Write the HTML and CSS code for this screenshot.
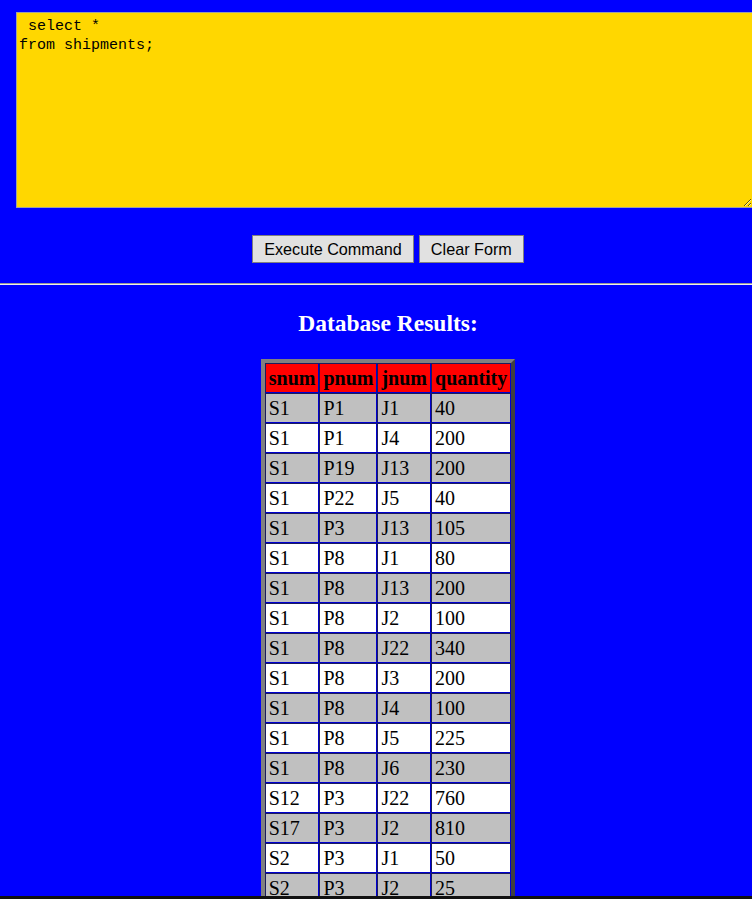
FILE: index.html
```html
<!DOCTYPE html>
<html>
<head>
<meta charset="utf-8">
<title>Database Client</title>
<link rel="stylesheet" href="styles.css">
</head>
<body>
<div class="page">
  <form class="command-form">
    <textarea class="command-box" name="sql"> select *
from shipments;</textarea>
    <div class="button-row">
      <button type="button" class="btn">Execute Command</button>
      <button type="reset" class="btn">Clear Form</button>
    </div>
  </form>
  <hr class="divider">
  <h2 class="results-title">Database Results:</h2>
  <table class="results">
    <thead>
      <tr><th>snum</th><th>pnum</th><th>jnum</th><th>quantity</th></tr>
    </thead>
    <tbody>
      <tr class="odd"><td>S1</td><td>P1</td><td>J1</td><td>40</td></tr>
      <tr class="even"><td>S1</td><td>P1</td><td>J4</td><td>200</td></tr>
      <tr class="odd"><td>S1</td><td>P19</td><td>J13</td><td>200</td></tr>
      <tr class="even"><td>S1</td><td>P22</td><td>J5</td><td>40</td></tr>
      <tr class="odd"><td>S1</td><td>P3</td><td>J13</td><td>105</td></tr>
      <tr class="even"><td>S1</td><td>P8</td><td>J1</td><td>80</td></tr>
      <tr class="odd"><td>S1</td><td>P8</td><td>J13</td><td>200</td></tr>
      <tr class="even"><td>S1</td><td>P8</td><td>J2</td><td>100</td></tr>
      <tr class="odd"><td>S1</td><td>P8</td><td>J22</td><td>340</td></tr>
      <tr class="even"><td>S1</td><td>P8</td><td>J3</td><td>200</td></tr>
      <tr class="odd"><td>S1</td><td>P8</td><td>J4</td><td>100</td></tr>
      <tr class="even"><td>S1</td><td>P8</td><td>J5</td><td>225</td></tr>
      <tr class="odd"><td>S1</td><td>P8</td><td>J6</td><td>230</td></tr>
      <tr class="even"><td>S12</td><td>P3</td><td>J22</td><td>760</td></tr>
      <tr class="odd"><td>S17</td><td>P3</td><td>J2</td><td>810</td></tr>
      <tr class="even"><td>S2</td><td>P3</td><td>J1</td><td>50</td></tr>
      <tr class="odd"><td>S2</td><td>P3</td><td>J2</td><td>25</td></tr>
      <tr class="even"><td>S2</td><td>P3</td><td>J3</td><td>10</td></tr>
      <tr class="odd"><td>S2</td><td>P3</td><td>J4</td><td>5</td></tr>
    </tbody>
  </table>
</div>
<div class="window-edge"></div>
</body>
</html>
```
FILE: styles.css
```css
html, body {
  margin: 0;
  padding: 0;
  background: #0000ff;
  overflow: hidden;
}

.page {
  width: 776px;
}

.command-form {
  padding-top: 12px;
  margin: 0;
}

.command-box {
  display: block;
  box-sizing: border-box;
  margin-left: 16px;
  width: 737px;
  height: 196px;
  padding: 4px 2px 2px;
  border: 1px solid #a0a0a0;
  background: #ffd700;
  color: #000;
  font-family: "Liberation Mono", "DejaVu Sans Mono", monospace;
  font-size: 15px;
  line-height: 19px;
  resize: both;
}

.button-row {
  display: flex;
  justify-content: center;
  gap: 5px;
  margin-top: 27px;
}

.btn {
  box-sizing: border-box;
  height: 28px;
  padding: 0 11px;
  border: 1px solid #808080;
  background: #e1e1e1;
  color: #000;
  font-family: "Liberation Sans", Arial, sans-serif;
  font-size: 16.2px;
}

.divider {
  margin: 20px 0 0;
  height: 0;
  border: none;
  border-top: 1px solid #9a9a9a;
  border-bottom: 1px solid #eeeeee;
}

.results-title {
  margin: 24px 0 22px;
  text-align: center;
  color: #fff;
  font-family: "Liberation Serif", "Times New Roman", serif;
  font-weight: bold;
  font-size: 23.5px;
  line-height: 28px;
}

.results {
  margin: 0 auto;
  border-collapse: separate;
  border-spacing: 0;
  border: 4px solid;
  border-color: #808080 #404040 #404040 #808080;
  font-family: "Liberation Serif", "Times New Roman", serif;
  font-size: 20px;
}

.results th,
.results td {
  padding: 1px 3px;
  line-height: 26px;
  text-align: left;
  color: #000;
  border: 1px solid;
  border-color: #1c1c5c #0000d0 #0000d0 #1c1c5c;
}

.results th {
  background: #ff0000;
  font-weight: bold;
}

.results .odd td {
  background: #c0c0c0;
}

.results .even td {
  background: #ffffff;
}

.window-edge {
  position: fixed;
  left: 0;
  right: 0;
  bottom: 0;
  height: 3px;
  background: #111111;
}
```
